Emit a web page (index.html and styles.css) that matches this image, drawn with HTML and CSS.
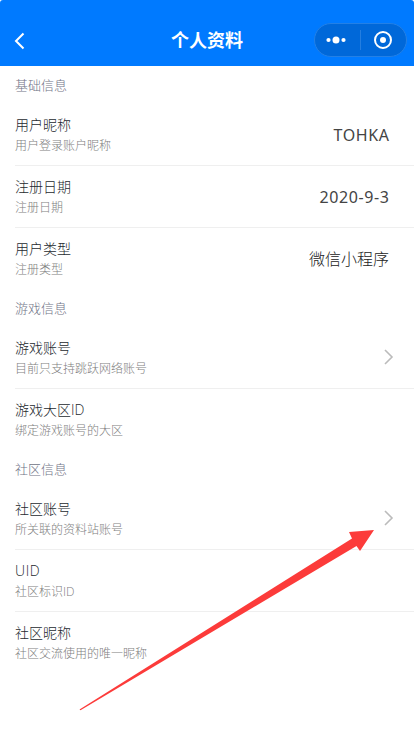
FILE: index.html
```html
<!DOCTYPE html>
<html lang="zh-CN">
<head>
<meta charset="utf-8">
<title>个人资料</title>
<link rel="stylesheet" href="styles.css">
</head>
<body>
<header class="navbar">
  <svg class="back" width="12" height="18" viewBox="0 0 12 18"><path d="M9.500 1.500 2 9l7.500 7.500"/></svg>
  <h1 class="title">个人资料</h1>
  <div class="capsule">
    <svg class="dots" width="20" height="10" viewBox="0 0 20 10"><circle cx="2.500" cy="5" r="2.100"/><circle cx="10" cy="5" r="3.500"/><circle cx="17.500" cy="5" r="2.100"/></svg>
    <span class="divider"></span>
    <svg class="target" width="18" height="18" viewBox="0 0 18 18"><circle class="ring" cx="9" cy="9" r="8"/><circle cx="9" cy="9" r="3"/></svg>
  </div>
</header>
<main>
  <section>
    <h2 class="group-title">基础信息</h2>
    <div class="cell"><div class="label"><p class="name">用户昵称</p><p class="note">用户登录账户昵称</p></div><span class="value latin">TOHKA</span></div>
    <div class="cell"><div class="label"><p class="name">注册日期</p><p class="note">注册日期</p></div><span class="value latin">2020-9-3</span></div>
    <div class="cell"><div class="label"><p class="name">用户类型</p><p class="note">注册类型</p></div><span class="value">微信小程序</span></div>
  </section>
  <section>
    <h2 class="group-title">游戏信息</h2>
    <div class="cell"><div class="label"><p class="name">游戏账号</p><p class="note">目前只支持跳跃网络账号</p></div><svg class="chevron" width="10" height="16" viewBox="0 0 10 16"><path d="M1 1l7 7-7 7"/></svg></div>
    <div class="cell"><div class="label"><p class="name">游戏大区ID</p><p class="note">绑定游戏账号的大区</p></div></div>
  </section>
  <section>
    <h2 class="group-title">社区信息</h2>
    <div class="cell"><div class="label"><p class="name">社区账号</p><p class="note">所关联的资料站账号</p></div><svg class="chevron" width="10" height="16" viewBox="0 0 10 16"><path d="M1 1l7 7-7 7"/></svg></div>
    <div class="cell"><div class="label"><p class="name uid">UID</p><p class="note">社区标识ID</p></div></div>
    <div class="cell"><div class="label"><p class="name">社区昵称</p><p class="note">社区交流使用的唯一昵称</p></div></div>
  </section>
</main>
<svg class="arrow" width="414" height="736" viewBox="0 0 414 736"><path d="M79.500 709.500 352 538.500 349 532 374 530 360 551 356.500 546 80.500 710.300z"/></svg>
</body>
</html>
```

FILE: styles.css
```css
* { box-sizing: border-box; margin: 0; padding: 0; }

body {
  position: relative;
  height: 736px;
  overflow: hidden;
  background: #fff;
  font-family: "Open Sans", "Noto Sans CJK SC", sans-serif;
}

svg { display: block; flex: none; }

.navbar {
  display: grid;
  grid-template-columns: 1fr auto 1fr;
  align-items: center;
  height: 66px;
  padding: 14px 7px 0 14px;
  background: #007aff;
  border-radius: 3px 3px 0 0;
  color: #fff;
}

.back { margin-top: 2px; }
.back path { fill: none; stroke: #fff; stroke-width: 2; }

.title {
  font-size: 18px;
  line-height: 26px;
  font-weight: 700;
  margin-right: 7px;
}

.capsule {
  justify-self: end;
  display: flex;
  align-items: center;
  width: 93px;
  height: 34px;
  padding: 0 14px 0 11px;
  border: 1px solid #2380e6;
  border-radius: 17px;
  background: #0068d9;
}

.dots, .target { fill: #fff; }
.dots { margin-right: 14px; }
.divider { width: 1px; height: 20px; margin-right: 13px; background: #247ee0; }
.ring { fill: none; stroke: #fff; stroke-width: 2; }

.group-title {
  height: 38px;
  padding-left: 15px;
  font-size: 13px;
  font-weight: 300;
  line-height: 38px;
  color: #6f7386;
}

.cell {
  display: flex;
  align-items: center;
  justify-content: space-between;
  height: 62px;
  margin-left: 15px;
  padding-right: 25px;
  border-bottom: 1px solid #efefef;
}

.cell:last-child { height: 61px; border-bottom: 0; }

.name { font-size: 14px; line-height: 22px; font-weight: 300; color: #24292e; }
.uid { letter-spacing: 0.6px; }
.note { font-size: 12px; line-height: 19px; font-weight: 300; color: #808080; }
.value { font-size: 16px; line-height: 24px; font-weight: 300; color: #222; }
.latin {
  margin-right: -0.6px;
  font-family: "Noto Sans", sans-serif;
  font-weight: 400;
  letter-spacing: 0.6px;
  color: #444;
}

.chevron { margin: 0 -5px 1px 0; }
.chevron path { fill: none; stroke: #bbb; stroke-width: 1.6; }

.arrow { position: absolute; top: 0; left: 0; fill: #fc3b3a; }
```
